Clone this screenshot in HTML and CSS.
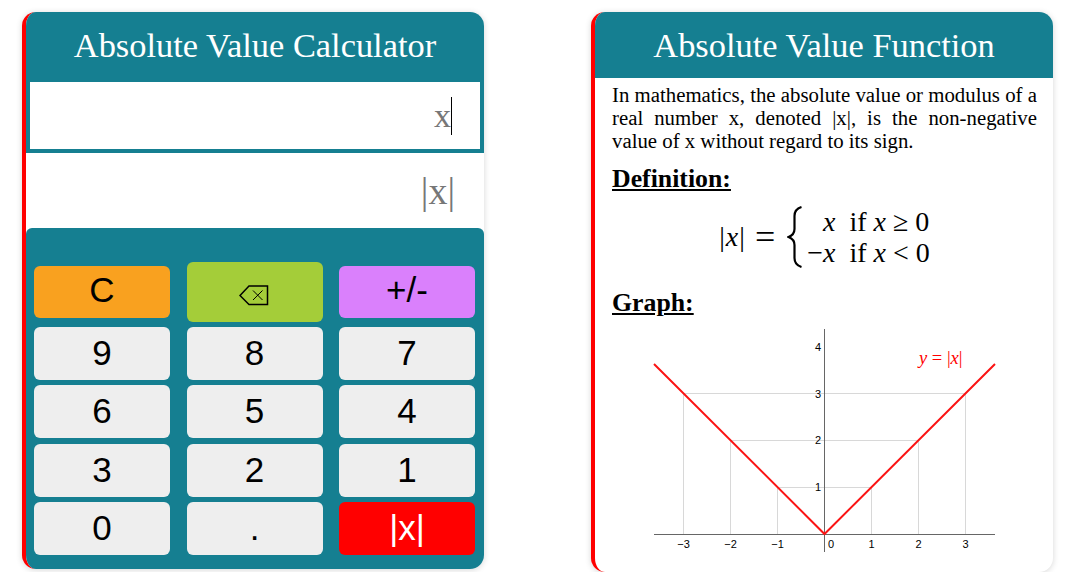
FILE: index.html
```html
<!doctype html>
<html lang="en">
<head>
<meta charset="UTF-8">
<title>Absolute Value Calculator</title>
<link rel="stylesheet" href="styles.css">
</head>
<body>
	<div class="page">
		<div class="card calc">
			<h1 class="card-title calc-title">Absolute Value Calculator</h1>
			<div class="entry"><span class="hint">x</span><span class="caret"></span></div>
			<div class="result"><span class="hint">|x|</span></div>
			<div class="keys">
				<button class="key key-clear">C</button>
				<button class="key key-back">
					<svg class="back-icon" width="30" height="21" viewBox="0 0 30 21">
						<path d="M28.5 1H10L1 10.5L10 19.500H28.500Z" fill="none" stroke="#000" stroke-width="1.500"/>
						<path d="M14 5.500L23.500 15M23.500 5.500L14 15" fill="none" stroke="#000" stroke-width="1"/>
					</svg>
				</button>
				<button class="key key-sign">+/-</button>
				<button class="key">9</button>
				<button class="key">8</button>
				<button class="key">7</button>
				<button class="key">6</button>
				<button class="key">5</button>
				<button class="key">4</button>
				<button class="key">3</button>
				<button class="key">2</button>
				<button class="key">1</button>
				<button class="key">0</button>
				<button class="key">.</button>
				<button class="key key-abs">|x|</button>
			</div>
		</div>

		<div class="card info">
			<h1 class="card-title">Absolute Value Function</h1>
			<div class="info-body">
				<p class="intro">In mathematics, the absolute value or modulus of a real number x, denoted |x|, is the non-negative value of x without regard to its sign.</p>
				<h2 class="sub">Definition:</h2>
				<div class="math">
					<span class="math-lhs">|<i>x</i>|</span>
					<span class="math-eq">=</span>
					<svg class="brace" width="16" height="62" viewBox="0 0 16 62">
						<path d="M14.500 1C9.500 2.500 7.500 5 7.500 10V23C7.500 27 5.500 29.500 1.500 31C5.500 32.500 7.500 35 7.500 39V52C7.500 57 9.500 59.500 14.500 61" fill="none" stroke="#000" stroke-width="2.200"/>
					</svg>
					<div class="cases">
						<span class="case-val"><i>x</i></span><span>if <i>x</i> ≥ 0</span>
						<span class="case-val">−<i>x</i></span><span>if <i>x</i> &lt; 0</span>
					</div>
				</div>
				<h2 class="sub">Graph:</h2>
				<svg class="graph" width="425" height="240" viewBox="612 325 425 240">
					<g stroke="#d8d8d8" stroke-width="1" fill="none">
						<path d="M683.500 534V393.500H965.500V534"/>
						<path d="M730.500 534V440.500H918.500V534"/>
						<path d="M777.500 534V487.500H871.500V534"/>
					</g>
					<g stroke="#666" stroke-width="1" fill="none">
						<path d="M654 534.500H995"/>
						<path d="M824.500 329V552"/>
					</g>
					<path d="M654 364L824.500 534L995 364" fill="none" stroke="#fb1414" stroke-width="2"/>
					<g class="tick">
						<text x="683.500" y="548" text-anchor="middle">−3</text>
						<text x="730.500" y="548" text-anchor="middle">−2</text>
						<text x="777.500" y="548" text-anchor="middle">−1</text>
						<text x="828" y="548">0</text>
						<text x="871.500" y="548" text-anchor="middle">1</text>
						<text x="918.500" y="548" text-anchor="middle">2</text>
						<text x="965.500" y="548" text-anchor="middle">3</text>
						<text x="815" y="491">1</text>
						<text x="815" y="444">2</text>
						<text x="815" y="398">3</text>
						<text x="815" y="351">4</text>
					</g>
					<text class="curve-label" x="919" y="364"><tspan class="curve-var">y</tspan> = |<tspan class="curve-var">x</tspan>|</text>
				</svg>
			</div>
		</div>
	</div>
</body>
</html>
```
FILE: styles.css
```css
* {
	box-sizing: border-box;
}
body {
	margin: 0;
	background: #fff;
	font-family: "Liberation Serif", serif;
	color: #000;
}

.page {
	display: flex;
	align-items: flex-start;
	gap: 107px;
	padding: 12px 22px 0;
}

.card {
	width: 462px;
	border-left: 4px solid #f00;
	border-radius: 14px;
	overflow: hidden;
	box-shadow: 0 1px 6px rgba(0, 0, 0, 0.16);
	background: #fff;
}

.card-title {
	margin: 0;
	height: 66px;
	background: #157f91;
	color: #fff;
	font-size: 34.4px;
	font-weight: normal;
	line-height: 66px;
	text-align: center;
}

.entry {
	display: flex;
	align-items: center;
	justify-content: flex-end;
	height: 75px;
	padding-right: 28px;
	border: 4px solid #157f91;
	background: #fff;
}
.hint {
	color: #777;
	font-size: 34px;
}
.caret {
	width: 1px;
	height: 38px;
	background: #000;
}

.result {
	display: flex;
	align-items: center;
	justify-content: flex-end;
	height: 75px;
	padding-right: 29px;
}
.result .hint {
	font-size: 38px;
}

.keys {
	display: grid;
	grid-template-columns: repeat(3, 136px);
	grid-template-rows: 59.2px repeat(4, 52.7px);
	column-gap: 16.5px;
	row-gap: 5.8px;
	padding: 34px 9px 14px 8px;
	background: #157f91;
	border-radius: 6px 6px 0 0;
}

.key {
	padding: 0 0 1px;
	border: 0;
	border-radius: 6px;
	background: #eee;
	color: #000;
	font-family: "Liberation Sans", sans-serif;
	font-size: 35px;
}
.key-clear, .key-sign {
	height: 52px;
	margin-top: 4px;
	padding-bottom: 4px;
}
.key-clear {
	background: #f9a11f;
}
.key-sign {
	background: #da80fc;
}
.key-back {
	margin-bottom: -0.8px;
	background: #a4cd39;
}
.key-abs {
	background: #f00;
	color: #fff;
}
.back-icon {
	display: block;
	margin: 9px auto 0 52px;
}

.info-body {
	padding: 5px 16px 7px 17px;
}
.intro {
	margin: 0;
	font-size: 20.8px;
	line-height: 23px;
	text-align: justify;
}
.sub {
	margin: 12px 0 0;
	font-size: 25.8px;
	line-height: 30px;
	text-decoration: underline;
}

.math {
	display: flex;
	align-items: center;
	justify-content: center;
	height: 70px;
	margin: 8px 0 16px;
	font-size: 28px;
}
.math-lhs {
	letter-spacing: 1px;
}
.math-eq {
	margin: 0 12px 0 9px;
	font-size: 36px;
	line-height: 31px;
}
.cases {
	display: grid;
	grid-template-columns: auto auto;
	column-gap: 14px;
	margin-left: 4px;
	line-height: 31px;
}
.case-val {
	text-align: right;
}

.graph {
	display: block;
	margin-top: 7px;
}
.tick text {
	font-family: "Liberation Sans", sans-serif;
	font-size: 11px;
	fill: #000;
}
.curve-label {
	font-family: "Liberation Serif", serif;
	font-size: 18.5px;
	fill: #f00;
}
.curve-var {
	font-style: italic;
}
```
